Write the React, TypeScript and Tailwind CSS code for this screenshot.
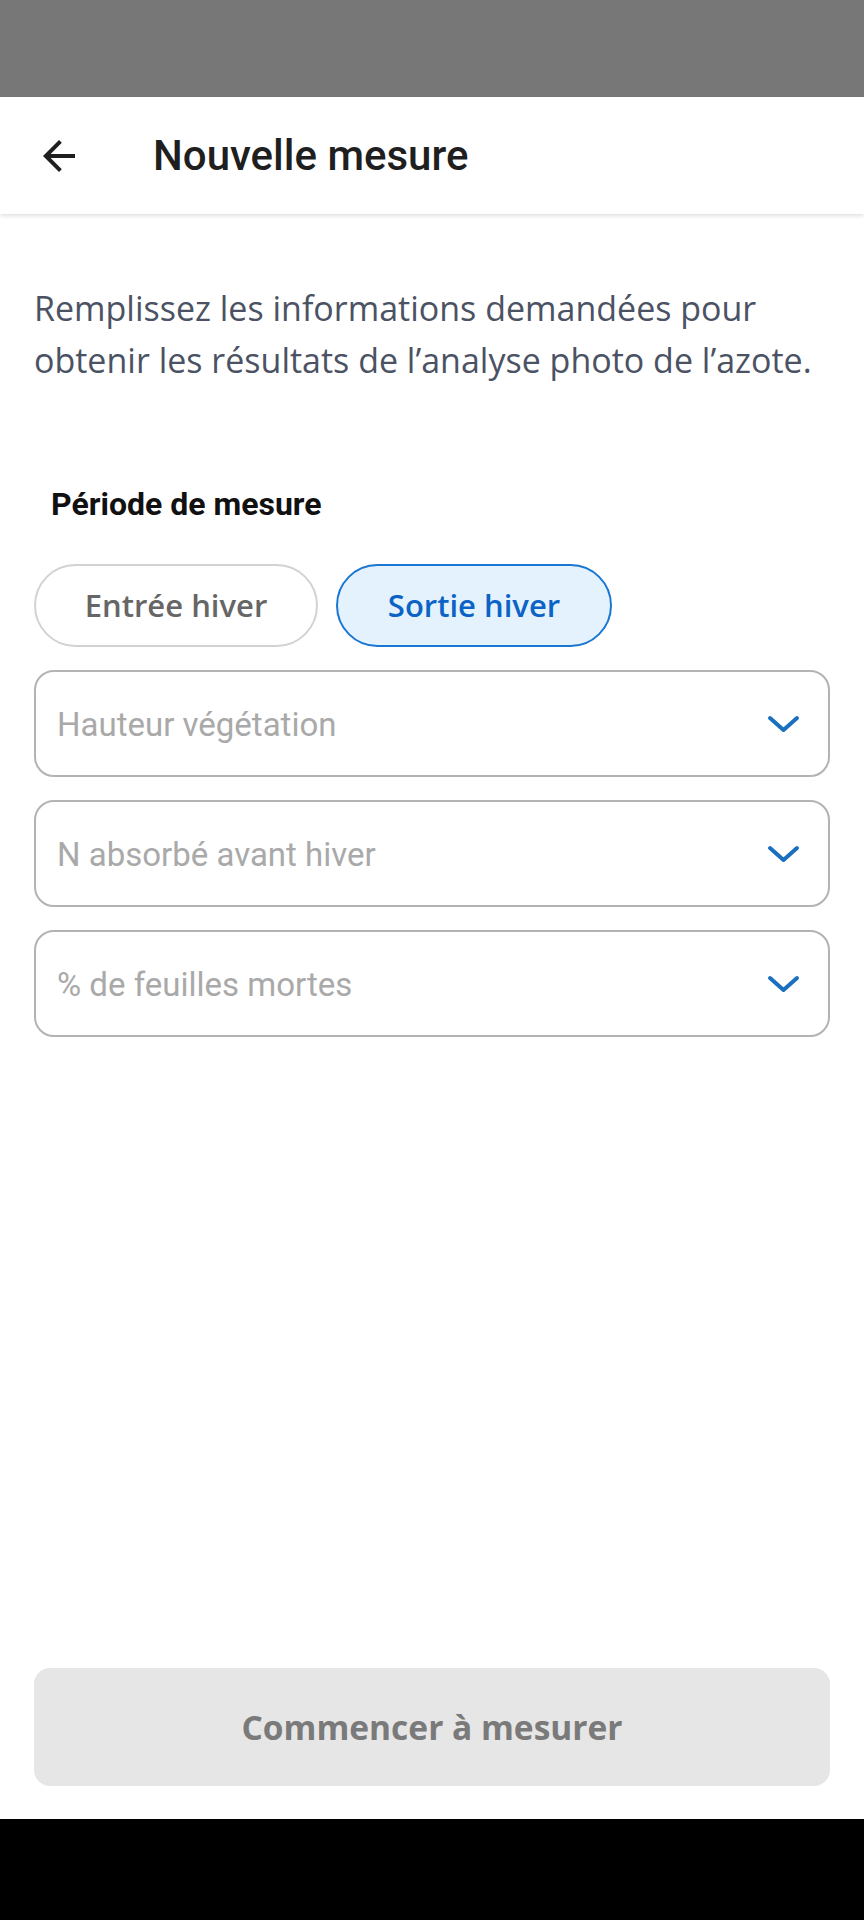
import { useState } from 'react'

const fields = ['Hauteur végétation', 'N absorbé avant hiver', '% de feuilles mortes']

function Chevron() {
  return (
    <svg className="w-[33px] h-[18px] shrink-0" viewBox="0 0 33 18" fill="none">
      <path d="M3 3L16.5 15L30 3" stroke="#1b6fbf" strokeWidth={4} strokeLinecap="round" strokeLinejoin="round" />
    </svg>
  )
}

export default function App() {
  const [period, setPeriod] = useState<'entree' | 'sortie'>('sortie')

  return (
    <div className="flex flex-col h-[1920px] bg-white">
      {/* Status bar */}
      <div className="h-[97px] bg-[#777777] shrink-0" />

      {/* Toolbar */}
      <header className="h-[117px] shrink-0 flex items-center pl-[35px] bg-white shadow-[0_2px_4px_rgba(0,0,0,0.12)] relative z-10">
        <svg className="w-[48px] h-[48px] text-[#1f1f1f]" viewBox="0 0 24 24" fill="currentColor">
          <path d="M20 11H7.83l5.59-5.59L12 4l-8 8 8 8 1.41-1.41L7.83 13H20v-2z" />
        </svg>
        <h1 className="ml-[70px] text-[42px] font-medium text-[#1f1f1f] font-['Roboto',sans-serif]">
          Nouvelle mesure
        </h1>
      </header>

      <main className="flex-1 flex flex-col px-[34px]">
        <p className="mt-[68px] text-[34px] leading-[52px] text-[#4b5263] font-['Open_Sans',sans-serif]">
          Remplissez les informations demandées pour obtenir les résultats de l’analyse photo de l’azote.
        </p>

        <h2 className="mt-[101px] pl-[17px] text-[32px] leading-[34px] font-bold text-[#111111] font-['Roboto',sans-serif]">
          Période de mesure
        </h2>

        <div className="mt-[43px] flex gap-[18px]">
          <button
            type="button"
            onClick={() => setPeriod('entree')}
            className={
              period === 'entree'
                ? 'h-[83px] w-[284px] rounded-full border-2 border-[#1976d2] bg-[#e3f2fd] text-[#0b63c5] text-[31px] font-semibold font-["Open_Sans",sans-serif]'
                : 'h-[83px] w-[284px] rounded-full border-2 border-[#d2d2d2] bg-white text-[#666666] text-[31px] font-semibold font-["Open_Sans",sans-serif]'
            }
          >
            Entrée hiver
          </button>
          <button
            type="button"
            onClick={() => setPeriod('sortie')}
            className={
              period === 'sortie'
                ? 'h-[83px] w-[276px] rounded-full border-2 border-[#1976d2] bg-[#e3f2fd] text-[#0b63c5] text-[31px] font-semibold font-["Open_Sans",sans-serif]'
                : 'h-[83px] w-[276px] rounded-full border-2 border-[#d2d2d2] bg-white text-[#666666] text-[31px] font-semibold font-["Open_Sans",sans-serif]'
            }
          >
            Sortie hiver
          </button>
        </div>

        <div className="mt-[23px] flex flex-col gap-[23px]">
          {fields.map((label) => (
            <div
              key={label}
              className="h-[107px] rounded-[20px] border-2 border-[#b3b3b3] flex items-center pl-[21px] pr-[28px]"
            >
              <span className="flex-1 pt-[3px] text-[33px] text-[#a9a9a9] font-['Roboto',sans-serif]">{label}</span>
              <Chevron />
            </div>
          ))}
        </div>
      </main>

      <div className="px-[34px] pb-[33px] shrink-0">
        <button
          type="button"
          disabled
          className="w-full h-[118px] rounded-[16px] bg-[#e6e6e6] text-[33.5px] font-bold text-[#7a7a7a] font-['Open_Sans',sans-serif]"
        >
          Commencer à mesurer
        </button>
      </div>

      {/* Navigation bar */}
      <div className="h-[101px] bg-black shrink-0" />
    </div>
  )
}
